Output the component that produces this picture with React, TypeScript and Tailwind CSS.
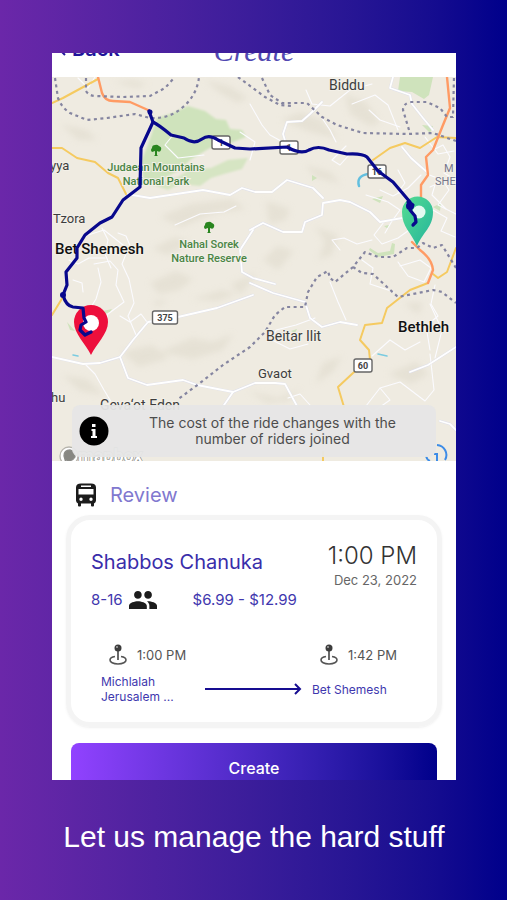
import type { ReactNode } from "react";

const whiteRoads = [
  "M52 357 83 364 100 363 120 357 133 340 148 322 178 317 217 308 253 295",
  "M120 357 128 378 147 385 183 380 197 385 233 392 255 383 275 383 285 384 297 406",
  "M233 392 222 408",
  "M250 283 273 293 305 302 310 318 322 327 340 322 357 325",
  "M126 194 150 198 183 193 203 190 230 195 242 188 255 192 272 192 287 180 313 188 323 198",
  "M250 230 263 223 283 232 302 232 305 222 322 215 323 203 340 200 350 202 370 212 380 222 402 218",
  "M253 230 240 250 242 272 253 278 275 284",
  "M393 77 390 88 410 95 412 104 423 118 433 130",
  "M322 102 310 114 302 121 287 122 283 134 287 147",
  "M402 147 411 158 420 166 427 172",
  "M456 347 428 365 410 372",
  "M440 421 450 424 456 430",
];

const streets = [
  "M78 78 88 88 95 77",
  "M250 104 262 125 270 135 281 141",
  "M240 132 255 142 250 160",
  "M306 90 312 104 330 106 350 90 372 84",
  "M322 118 330 130 336 142",
  "M352 104 375 95 388 105 398 130",
  "M369 110 380 120 400 127",
  "M350 154 340 165 332 160 346 146",
  "M340 250 332 240 344 238 357 244 372 240",
  "M330 282 338 302 346 320",
  "M362 260 373 268 370 284 394 292",
  "M384 222 374 235 382 244 398 238 412 228",
  "M366 195 388 202 400 210 392 221 385 233",
  "M398 262 408 276 424 282 431 268 420 260 400 266",
  "M435 285 431 304 438 316 426 326 430 350",
  "M430 304 442 330 435 358",
  "M372 356 390 340 405 350 420 342",
  "M380 388 390 400 373 412 366 406 380 388 400 382 425 401 434 390 430 354",
  "M315 318 296 325 276 330 272 340 290 349 308 344",
  "M310 405 300 394 288 398",
  "M88 235 104 230 118 241 128 249 122 264 129 279 134 303 128 316 136 335",
  "M94 264 110 261 118 270 116 285 124 302 108 314 99 335",
  "M98 268 101 282 96 299 91 307",
  "M69 260 78 264 89 258 105 258",
  "M83 248 93 252 101 246 119 255",
  "M102 228 108 240 105 254 111 268",
  "M118 233 126 236 131 248",
  "M73 280 82 283 83 292",
  "M85 364 95 374 104 390 113 405",
  "M147 322 141 314 130 322 120 316",
  "M175 225 200 214 224 212 236 206",
  "M173 135 165 145 178 158 204 155",
  "M433 150 443 145 450 157 444 173 456 180",
  "M430 187 443 181 449 190 438 205 456 214",
  "M433 210 447 218 441 231 455 237",
  "M427 174 437 178 432 195 446 209",
  "M380 190 393 196 408 188 421 175",
  "M398 170 405 183 398 192 411 200",
  "M425 137 438 154 454 151",
];

const borders = [
  "M55 78 58 98Q62 108 70 113L87 120 107 118 135 114 150 118Q170 119 183 107 197 95 199 77",
  "M86 78V91Q89 96 96 96L123 97 150 96 165 88 175 77",
  "M238 77 265 97 280 105 293 106",
  "M262 78 270 95 282 103 307 103 322 117 337 125 363 133 407 134 433 133 456 141",
  "M409 130 403 110Q403 104 410 102L427 102 440 108 447 117 453 117 454 77",
  "M456 268 442 245 433 248 423 243 417 248 407 248 393 257 378 257 365 252 353 267 335 282 330 278 328 271 317 277 308 292 305 307 285 307 275 315 265 332 250 347 223 365 200 383 177 400",
  "M353 267 362 273 373 274 387 287 398 297 433 290 442 292 456 303",
];

const yellowRoads = [
  "M52 103 63 98 98 79",
  "M52 148 62 148 77 158 95 162 108 173 118 178 126 194",
  "M373 160 390 148 405 143 420 148 437 137 456 138",
  "M428 283 410 290 387 308 382 323 365 325 360 340 369 350 370 360 353 373 338 387 344 407",
  "M456 248 447 272 438 278 433 274",
  "M63 297 52 315",
  "M323 452V461",
];

const orangeRoads = [
  "M98 77 102 93Q105 101 113 101L130 102 148 110",
  "M447 77 450 108 443 125 433 150 426 157 428 175 421 185V200",
  "M412 242 420 250Q432 259 433 270L428 283",
];

const hills = [
  "M205 80 231 87 248 98 238 103 220 93ZM281 120 300 112 321 120 339 139 310 132Z",
  "M160 217 190 204 232 199 246 209 215 213 181 227ZM152 249 175 237 191 243 168 255Z",
  "M266 201 290 209 286 220 269 224ZM315 227 338 235 332 255 318 260 325 242Z",
  "M263 260 277 246 294 251 278 270ZM230 284 257 273 241 295Z",
  "M150 283 176 271 193 279 179 290 159 294ZM152 302 169 299 158 307Z",
  "M160 352 192 338 213 342 233 334 223 350 193 359ZM122 352 152 345 169 358 139 367Z",
  "M323 363 342 356 334 371 315 384ZM388 374 416 362 429 374 411 384Z",
  "M60 124 87 130 97 140 78 140ZM113 82 137 88 148 84 132 80Z",
  "M345 94 367 103 380 123 370 126 350 114ZM305 165 330 172 341 184 315 177Z",
  "M192 299 222 290 237 294 217 301ZM62 375 87 379 104 395 80 391Z",
  "M248 391 267 403 288 401 301 389 278 398ZM403 303 423 302 419 315Z",
];

type LabelProps = { x: number; y: number; size?: number; weight?: number; fill?: string; anchor?: "start" | "middle"; children: ReactNode };

function Label({ x, y, size = 13, weight = 400, fill = "#3d3d3d", anchor = "start", children }: LabelProps) {
  return (
    <text x={x} y={y} fontSize={size} fontWeight={weight} fill={fill} textAnchor={anchor} stroke="#f3f0e8" strokeWidth="2" paintOrder="stroke">
      {children}
    </text>
  );
}

function RoadShield({ x, y, label, width = 18 }: { x: number; y: number; label: string; width?: number }) {
  return (
    <g>
      <rect x={x - width / 2} y={y - 6} width={width} height="13" rx="2" fill="#fff" stroke="#666" strokeWidth="1.4" />
      <text x={x} y={y + 4} fontSize="9" fontWeight="700" textAnchor="middle" fill="#444">{label}</text>
    </g>
  );
}

function Tree({ x, y }: { x: number; y: number }) {
  return (
    <g transform={`translate(${x} ${y})`} fill="#29851f">
      <path d="M-1 1-4 2Q-6 0-4-2-4-5-1-5 1-6 3-4 6-3 5 0 4 3 1 1V5L2 6H-2L-1 5Z" />
    </g>
  );
}

function RouteMap() {
  return (
    <svg viewBox="52 77 404 384" className="block w-full font-['Roboto',sans-serif]" role="img" aria-label="Ride route">
      <defs>
        <linearGradient id="destination" x1="0" y1="0" x2="1" y2="1">
          <stop offset="0" stopColor="#55dc91" />
          <stop offset="1" stopColor="#24b49c" />
        </linearGradient>
        <filter id="soft"><feGaussianBlur stdDeviation="3" /></filter>
        <filter id="edge"><feGaussianBlur stdDeviation="1" /></filter>
      </defs>
      <rect x="52" y="77" width="404" height="384" fill="#efebe1" />
      <g fill="#ddd8c9" opacity=".5" filter="url(#soft)">
        {hills.map((d) => <path key={d} d={d} />)}
      </g>

      <g fill="#cfe3bc">
        <g filter="url(#edge)">
          <path d="M157 118 173 113 188 106 205 111 216 119 226 120 230 129 242 130 246 137 228 144 210 148 190 160 180 170 160 180 144 182 141 162 148 144Z" />
          <path d="M150 184 178 177 190 169 211 168 228 160 248 158 242 169 224 174 211 178 200 186 180 184 168 190Z" opacity=".8" />
        </g>
        <path d="M400 77H433L429 95 424 99 412 92 398 91Z" />
        <path d="M370 248 378 253 390 251 392 243 395 244 394 254 378 257 369 250ZM372 199 383 196 380 203Z" />
        <path d="M433 207 441 203 440 211ZM384 226 389 225 388 229ZM422 125 433 126 430 133ZM67 322 75 331 70 330Z" />
        <path d="M94 313 112 309 110 312 96 317ZM312 175 317 178 312 181ZM291 331 297 329 295 333Z" />
      </g>

      <g fill="none" strokeLinejoin="round" strokeLinecap="round">
        <g stroke="#fbfbff" strokeWidth="1.1">{streets.map((d) => <path key={d} d={d} />)}</g>
        <g stroke="#dedfeb" strokeWidth="2.6">{whiteRoads.map((d) => <path key={d} d={d} />)}</g>
        <g stroke="#fff" strokeWidth="1.8">{whiteRoads.map((d) => <path key={d} d={d} />)}</g>
        <g stroke="#f5ca60" strokeWidth="2">{yellowRoads.map((d) => <path key={d} d={d} />)}</g>
        <g stroke="#ff9b64" strokeWidth="2.4">{orangeRoads.map((d) => <path key={d} d={d} />)}</g>
        <g stroke="#8585a0" strokeWidth="2.2" strokeDasharray="3 3.5" strokeLinecap="butt">
          {borders.map((d) => <path key={d} d={d} />)}
        </g>
        <path d="M368 174Q356 176 359 186" stroke="#62bfdf" strokeWidth="2.5" />
        <path d="M378 354 387 356M73 355 78 356" stroke="#7acbe0" strokeWidth="1.5" />
      </g>

      <Label x={329} y={90} size={14}>Biddu</Label>
      <Label x={50} y={170}>yya</Label>
      <Label x={53} y={223}>Tzora</Label>
      <Label x={55} y={254} size={15} weight={500} fill="#111">Bet Shemesh</Label>
      <Label x={266} y={341} size={14}>Beitar Ilit</Label>
      <Label x={258} y={378}>Gvaot</Label>
      <Label x={398} y={332} size={15} weight={500} fill="#111">Bethleh</Label>
      <Label x={51} y={402}>hu</Label>
      <Label x={100} y={410} size={14}>Geva‘ot Eden</Label>
      <Label x={444} y={172} size={11} fill="#76768b">M</Label>
      <Label x={435} y={185} size={11} fill="#76768b">SHE</Label>
      <Tree x={156} y={150} />
      <Tree x={209} y={227} />
      <Label x={156} y={171} size={11} weight={500} fill="#4a8545" anchor="middle">Judaean Mountains</Label>
      <Label x={156} y={185} size={11} weight={500} fill="#4a8545" anchor="middle">National Park</Label>
      <Label x={209} y={248} size={11} weight={500} fill="#4a8545" anchor="middle">Nahal Sorek</Label>
      <Label x={209} y={262} size={11} weight={500} fill="#4a8545" anchor="middle">Nature Reserve</Label>
      <RoadShield x={221} y={142} label="1" />
      <RoadShield x={289} y={147} label="1" />
      <RoadShield x={377} y={171} label="16" />
      <RoadShield x={165} y={317} label="375" width={25} />
      <RoadShield x={363} y={365} label="60" />

      <path d="M91 355C86 344 74 334 74 322A17 17 0 0 1 108 322C108 334 96 344 91 355Z" fill="#ed0f3c" />
      <circle cx="91" cy="323" r="8" fill="#fff" />
      <path d="M417 246C411 232 402 227 402 212A15.500 15.500 0 0 1 433 212C433 227 423 232 417 246Z" fill="url(#destination)" />
      <circle cx="419" cy="212" r="6.500" fill="#e4faf1" />
      <g fill="none" stroke="#08088c" strokeWidth="3.200" strokeLinejoin="round" strokeLinecap="round">
        <path d="M149 111 153 122Q159 125 171 135L184 138Q194 145 202 139 209 134 218 140L235 148 250 149 287 147Q301 155 309 150 318 145 329 150L347 154Q362 153 367 157L378 171 393 182 410 202" />
        <path d="M408 202 413 205 410 210 415 216 416 222 413 225" />
        <path d="M153 122 141 148 140 187 123 200 112 217 100 223 85 235 77 248V258L66 272 67 285 63 295Q66 306 73 307L83 308 84 318 86 322 81 325 80 330 85 335 91 332" />
      </g>
      <circle cx="150" cy="112" r="2.500" fill="#08088c" />
      <circle cx="63" cy="295" r="3" fill="#08088c" />
      <circle cx="410" cy="206" r="4" fill="#08088c" />

      <g fill="#fff" stroke="#8b8b87" strokeWidth="1.300">
        <circle cx="69" cy="456" r="9" stroke="#b7b5ad" />
        <path d="M66 463 64 456Q64 450 70 450 75 451 75 457 72 462 66 460" fill="#878782" />
        <text x="78" y="462" fontSize="18" fontWeight="600" paintOrder="stroke">mapbox</text>
      </g>
      <g fill="none" stroke="#3d8ce7" strokeWidth="2">
        <path d="M437 445A10 10 0 0 1 445 460M426 456Q427 460 430 461M434 454H437V462" />
      </g>
    </svg>
  );
}

function InfoIcon() {
  return (
    <svg viewBox="0 0 30 30" className="size-[30px] shrink-0" aria-hidden="true">
      <circle cx="15" cy="15" r="14.500" fill="#000" />
      <path d="M13 8h3.500v3H13zM12.500 13h4v7h1.500v2h-6v-2h1.500v-5h-1z" fill="#fff" />
    </svg>
  );
}

function BusIcon() {
  return (
    <svg viewBox="0 0 20 23" className="h-6 w-5" fill="#1c1c1c" aria-hidden="true">
      <path fillRule="evenodd" d="M0 4Q0 0 5 0H15Q20 0 20 4V17Q20 19 18 20V22Q18 23 17 23H16Q15 23 15 22V20H5V22Q5 23 4 23H3Q2 23 2 22V20Q0 19 0 17ZM2.500 5.500V11H17.500V5.500ZM5 2V3.500H15V2ZM5 14A1.700 1.700 0 1 0 5 17.400 1.700 1.700 0 0 0 5 14ZM15 14A1.700 1.700 0 1 0 15 17.400 1.700 1.700 0 0 0 15 14Z" />
    </svg>
  );
}

function RidersIcon() {
  return (
    <svg viewBox="1 5 22 14" className="h-[18px] w-7" fill="#1c1c1c" aria-hidden="true">
      <path d="M16 11c1.660 0 2.990-1.340 2.990-3S17.660 5 16 5s-3 1.340-3 3 1.340 3 3 3zm-8 0c1.660 0 2.990-1.340 2.990-3S9.660 5 8 5 5 6.340 5 8s1.340 3 3 3zm0 2c-2.330 0-7 1.170-7 3.500V19h14v-2.500c0-2.330-4.670-3.500-7-3.500zm8 0c-.29 0-.62.020-.97.050 1.160.84 1.970 1.970 1.970 3.450V19h6v-2.500c0-2.330-4.670-3.500-7-3.500z" />
    </svg>
  );
}

function StopIcon() {
  return (
    <svg viewBox="0 0 18 21" className="h-[21px] w-[18px]" fill="none" aria-hidden="true">
      <path d="M6 12.500C3 13 1 14 1 16 1 18 4 20 9 20S17 18 17 16C17 14 15 13 12 12.500" stroke="#555" strokeWidth="1.600" />
      <path d="M9 6V16" stroke="#444" strokeWidth="1.600" />
      <circle cx="9" cy="4" r="3.500" fill="#3c3c3c" />
      <circle cx="8" cy="3" r="1" fill="#aaa" />
    </svg>
  );
}

function Stop({ time, place }: { time: string; place: ReactNode }) {
  return (
    <div>
      <div className="flex items-center gap-2.5 pl-2 text-[13px] leading-5 text-[#555]">
        <StopIcon />
        <span>{time}</span>
      </div>
      <div className="flex h-12 items-center text-xs leading-[15px] text-[#4037ae]">{place}</div>
    </div>
  );
}

export default function App() {
  return (
    <main className="min-h-screen bg-linear-to-r from-[#6b27a9] to-[#00008b] pt-[53px] pr-[51px] pl-[52px] font-['Inter',sans-serif]">
      <section className="overflow-hidden bg-white">
        <header className="grid h-6 grid-cols-3 items-start overflow-hidden">
          <a href="#back" className="-mt-4 flex items-center gap-1.5 pl-1.5 text-xl leading-6 font-semibold text-[#20149a]">
            <svg viewBox="0 0 8 14" className="h-3.5 w-2" fill="none" stroke="currentColor" strokeWidth="2" aria-hidden="true"><path d="M7 1 1 7l6 6" /></svg>
            Back
          </a>
          <h1 className="-mt-5 text-center font-['Liberation_Serif',serif] text-3xl leading-9 text-[#5148b2] italic">Create</h1>
        </header>

        <div className="relative">
          <RouteMap />
          <div className="absolute inset-x-5 bottom-1 flex items-center gap-5 rounded-lg bg-[#e6e6e6]/95 py-2.5 pr-5 pl-[7px] text-[#4d4d4d]">
            <InfoIcon />
            <p className="flex-1 text-center text-sm leading-4">
              The cost of the ride changes with the
              <br />
              number of riders joined
            </p>
          </div>
        </div>

        <div className="px-3.5 pt-5">
          <h2 className="flex items-center gap-3.5 pl-2.5 text-xl leading-7 text-[#8178cf]">
            <BusIcon />
            Review
          </h2>

          <article className="mt-1.5 rounded-3xl border-[5px] border-[#f4f4f4] px-5 pt-5 pb-[9px] shadow-sm shadow-black/5">
            <div className="flex justify-between">
              <div className="pt-2">
                <h3 className="text-xl leading-7 text-[#392daa]">Shabbos Chanuka</h3>
                <div className="mt-3 flex items-center text-[15px] leading-6 text-[#4137ae]">
                  <span>8-16</span>
                  <span className="mr-9 ml-1.5"><RidersIcon /></span>
                  <span>$6.99 - $12.99</span>
                </div>
              </div>
              <div className="text-right">
                <div className="text-2xl leading-8 font-light text-[#333]">1:00 PM</div>
                <div className="text-[13px] leading-4 text-[#666]">Dec 23, 2022</div>
              </div>
            </div>
            <div className="mt-8 flex justify-between pr-5 pl-2.5">
              <Stop time="1:00 PM" place={<span>Michlalah<br />Jerusalem ...</span>} />
              <svg viewBox="0 0 97 12" className="mt-[39px] ml-2 h-3 w-[97px]" fill="none" stroke="#170d91" strokeWidth="2" aria-hidden="true">
                <path d="M0 6H95M90 1 95 6 90 11" />
              </svg>
              <Stop time="1:42 PM" place="Bet Shemesh" />
            </div>
          </article>

          <div className="mt-4 -mb-[13px] px-[5px]">
            <button className="h-[50px] w-full rounded-lg bg-linear-to-r from-[#9142ff] to-[#00008b] text-base font-medium text-white">Create</button>
          </div>
        </div>
      </section>

      <p className="py-9 text-center font-['Liberation_Sans',sans-serif] text-3xl leading-[42px] text-white">Let us manage the hard stuff</p>
    </main>
  );
}
